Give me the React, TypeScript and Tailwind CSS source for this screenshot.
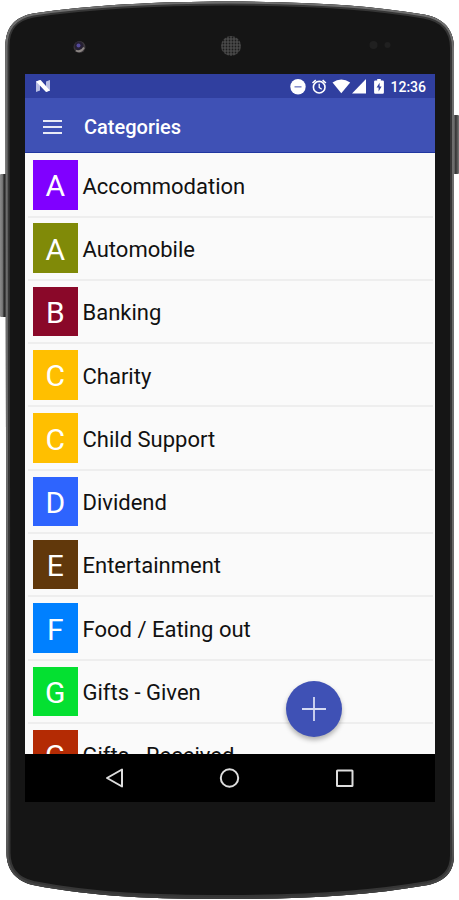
type Category = { name: string; color: string };

const categories: Category[] = [
  { name: "Accommodation", color: "bg-[#8000ff]" },
  { name: "Automobile", color: "bg-[#808a08]" },
  { name: "Banking", color: "bg-[#8a0829]" },
  { name: "Charity", color: "bg-[#ffbf00]" },
  { name: "Child Support", color: "bg-[#ffbf00]" },
  { name: "Dividend", color: "bg-[#2e64fe]" },
  { name: "Entertainment", color: "bg-[#61380b]" },
  { name: "Food / Eating out", color: "bg-[#0080ff]" },
  { name: "Gifts - Given", color: "bg-[#04e031]" },
  { name: "Gifts - Received", color: "bg-[#b42b04]" },
];

const SHELL =
  "M5.5 46 C5.5 27 15 17 33 13.5 C90 5 160 1.5 229 1.5 C305 1.5 370 5 424 14.5 C444 18 454 30 454 48 V855 C454 872 445 881 428 885 C365 896 300 899 229 899 C155 899 95 897 33 885 C16 881 6.5 870 6.5 853 Z";

function PhoneShell() {
  return (
    <svg className="absolute inset-0" width="459" height="900" viewBox="0 0 459 900" fill="none">
      <defs>
        <linearGradient id="volume" x1="0" x2="6" y1="0" y2="0" gradientUnits="userSpaceOnUse">
          <stop stopColor="#8b8b8b" />
          <stop offset="0.4" stopColor="#777" />
          <stop offset="0.7" stopColor="#222" />
          <stop offset="1" stopColor="#555" />
        </linearGradient>
        <linearGradient id="power" x1="453" x2="459" y1="0" y2="0" gradientUnits="userSpaceOnUse">
          <stop stopColor="#999" />
          <stop offset="0.45" stopColor="#333" />
          <stop offset="1" stopColor="#777" />
        </linearGradient>
        <linearGradient id="rim" x1="0" x2="0" y1="0" y2="900" gradientUnits="userSpaceOnUse">
          <stop stopColor="#6f6f6f" />
          <stop offset="0.9" stopColor="#686868" />
          <stop offset="1" stopColor="#3a3a3a" />
        </linearGradient>
        <pattern id="mesh" width="3" height="3" patternUnits="userSpaceOnUse">
          <rect width="3" height="3" fill="#484848" />
          <circle cx="1.5" cy="1.5" r="0.9" fill="#1c1c1c" />
        </pattern>
        <clipPath id="shell">
          <path d={SHELL} />
        </clipPath>
      </defs>
      <rect x="0" y="174" width="7" height="143" rx="1" fill="url(#volume)" />
      <rect x="452" y="115" width="7" height="59" rx="1" fill="url(#power)" />
      <path d={SHELL} fill="#151515" />
      <g clipPath="url(#shell)">
        <path d={SHELL} stroke="#363636" strokeWidth="8" />
        <path d={SHELL} stroke="url(#rim)" strokeWidth="4" />
      </g>
      <circle cx="79.5" cy="47" r="6" fill="#3d393d" />
      <circle cx="79" cy="46" r="4.5" fill="#262033" />
      <circle cx="78.5" cy="45.5" r="2" fill="#554a9c" />
      <path d="M76 50.5Q81 53 84 47.5" stroke="#8c8683" strokeWidth="1.8" />
      <circle cx="231" cy="46" r="10" fill="url(#mesh)" />
      <circle cx="373.5" cy="45" r="4" fill="#202020" />
      <circle cx="387.5" cy="45" r="3" fill="#202020" />
    </svg>
  );
}

function StatusBar() {
  return (
    <div className="flex h-6 shrink-0 items-center bg-[#303f9f] pr-[8.5px] pl-2.5 text-white">
      <svg width="16" height="14" viewBox="0 0 16 14" fill="none">
        <path d="M1 2.5L5 1v10.5L1 13zM11 2.5L15 1v10.5L11 13z" fill="#b9bfe4" />
        <path d="M1 2.6L5.6 1 15 11.4 11 13z" fill="#fff" />
      </svg>
      <svg className="ml-auto" width="98" height="18" viewBox="0 0 98 18" fill="#fff">
        <circle cx="12" cy="9.8" r="7.7" />
        <path d="M8.5 9.8h7" stroke="#8790cb" strokeWidth="1.6" />
        <g fill="none" stroke="#fff" strokeWidth="1.6">
          <circle cx="33.2" cy="10.2" r="5.8" />
          <path d="M26.5 6L29.8 3.2M39.9 6L36.6 3.2" />
          <path d="M33.2 6.8V10.5L35.7 12.2" strokeWidth="1.3" />
        </g>
        <path d="M46.5 5.5Q55.3-0.7 64.2 5.5L55.3 16.3z" />
        <path d="M80 2v14.4H66z" />
        <path d="M91.2 2h3.6v1.4h1.9q1.2 0 1.2 1.2v10.9q0 1.2-1.2 1.2h-7.4q-1.2 0-1.2-1.2V4.6q0-1.2 1.2-1.2h1.9z" />
        <path d="M93.6 5.7l-3 4.9h2v3.8l3-5h-2z" fill="#303f9f" />
      </svg>
      <span className="ml-[6px] pt-[2px] text-[14px] leading-none font-medium">12:36</span>
    </div>
  );
}

function Toolbar() {
  return (
    <header className="flex h-[55px] shrink-0 items-center border-b border-[#2036a0] bg-[#3f51b5] pt-[3px] pl-[18px] text-white">
      <div className="flex w-[19px] flex-col gap-[4px]">
        <span className="h-[2px] bg-[#e8eaf6]" />
        <span className="h-[2px] bg-[#e8eaf6]" />
        <span className="h-[2px] bg-[#e8eaf6]" />
      </div>
      <h1 className="ml-[22px] pt-px text-[20px] leading-none font-medium">Categories</h1>
    </header>
  );
}

function CategoryRow({ name, color }: Category) {
  return (
    <li className="flex h-[63.3px] shrink-0 items-center border-b-2 border-[#eeeeee] pl-[5px]">
      <span className={`flex h-[49.5px] w-[44.5px] items-center justify-center pt-[3px] text-[30px] leading-none text-white ${color}`}>
        {name[0]}
      </span>
      <span className="ml-[5px] pt-[3.5px] text-[22px] leading-none whitespace-nowrap text-[#111]">{name}</span>
    </li>
  );
}

function NavBar() {
  return (
    <nav className="flex h-12 shrink-0 items-center bg-black">
      <svg width="409" height="48" viewBox="0 0 409 48" fill="none" stroke="#dedede" strokeWidth="2" strokeLinejoin="round">
        <path d="M97 15.5v17L82 24z" />
        <circle cx="204.5" cy="24" r="8.7" />
        <rect x="312" y="16.5" width="15.5" height="15.5" rx="0.5" />
      </svg>
    </nav>
  );
}

export default function App() {
  return (
    <div className="relative h-[900px] w-[459px] overflow-hidden bg-white pt-[74px] pl-[25px] font-[Roboto,sans-serif]">
      <PhoneShell />
      <div className="relative flex h-[728px] w-[409.5px] flex-col">
        <StatusBar />
        <Toolbar />
        <main className="relative min-h-0 flex-1 overflow-hidden bg-[#fafafa]">
          <ul className="flex flex-col pt-[1.3px] pr-[2px] pl-[3px]">
            {categories.map((category) => (
              <CategoryRow key={category.name} {...category} />
            ))}
          </ul>
          <button
            aria-label="Add category"
            className="absolute right-[92.5px] bottom-[17px] flex size-14 items-center justify-center rounded-full bg-[#3f51b5] shadow-[0_3px_5px_rgba(0,0,0,0.3)]"
          >
            <svg width="24" height="24" viewBox="0 0 24 24" stroke="#d5daf3" strokeWidth="1.8">
              <path d="M12 0v24M0 12h24" />
            </svg>
          </button>
        </main>
        <NavBar />
      </div>
    </div>
  );
}
